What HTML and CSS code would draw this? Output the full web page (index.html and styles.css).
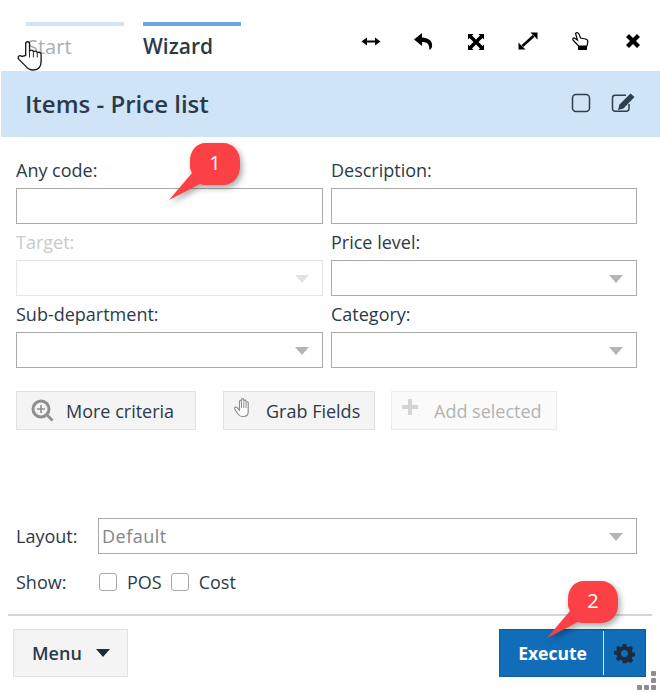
FILE: index.html
```html
<!doctype html>
<html lang="en">
<head>
    <meta charset="utf-8">
    <title>Items - Price list</title>
    <link rel="stylesheet" href="styles.css">
</head>
<body>
<div class="page">
    <div class="topbar">
        <div class="tab tab-start">Start</div>
        <div class="tab tab-wizard">Wizard</div>
        <div class="tools">
            <svg class="tool" viewBox="0 0 20 20"><path d="M.5 10.500l5.500-4v3h8v-3l5.500 4-5.500 4v-3H6v3z"/></svg>
            <svg class="tool" viewBox="0 0 20 20"><path d="M9 2L1 8.500 9 15v-4c3.500 0 6 .8 7 4l.5 4c2-1 3-3 2.500-6-.7-4-4-6-10-6.500z"/></svg>
            <svg class="tool" viewBox="0 0 20 20"><path d="M2 3h5.500L6 4.500l4 4 4-4L12.500 3H18v5.500L16.500 7l-4 4 4 4 1.500-1.500V19h-5.500l1.500-1.500-4-4-4 4L7.500 19H2v-5.500L3.500 15l4-4-4-4L2 8.500z"/></svg>
            <svg class="tool" viewBox="0 0 20 20"><path d="M12.500 1.500h7v7zM7.500 18.500h-7v-7z"/><path d="M15.500 5L4.500 15" stroke="#000" stroke-width="2.600"/></svg>
            <svg class="tool" viewBox="0 0 20 20"><path d="M4.500 2.500c1-1.200 3-1 3.500.5l1.500 4 5 1c1.500.4 2.500 1.500 2.300 3l-.8 4H7.500L2 9c-.8-1 .4-2.600 1.800-1.800L6.500 9z" fill="#fff" stroke="#000" stroke-width="1.200"/><rect x="7" y="15" width="9" height="4"/></svg>
            <svg class="tool" viewBox="0 0 20 20"><path d="M3 6l3-3 4 4 4-4 3 3-4 4 4 4-3 3-4-4-4 4-3-3 4-4z"/></svg>
        </div>
    </div>

    <div class="title-bar">
        <h1 class="title">Items - Price list</h1>
        <div class="title-icons">
            <svg class="title-icon" viewBox="0 0 20 20"><rect x="1.500" y="1.500" width="17" height="17" rx="3.500" fill="none" stroke="#2f3d4c" stroke-width="1.500"/></svg>
            <svg class="title-icon title-icon-edit" viewBox="0 0 24 20"><path d="M18 11v4.500c0 1.700-1 2.700-2.700 2.700H4.200c-1.700 0-2.700-1-2.700-2.700V5c0-1.700 1-2.700 2.700-2.700H15" fill="none" stroke="#2f3d4c" stroke-width="1.500"/><path d="M19.500.5l4 3.500-11 11.500-5.500 1.500 1.500-5.500z" fill="#2f3d4c"/></svg>
        </div>
    </div>

    <div class="form">
        <div class="grid">
            <div class="field">
                <label class="label">Any code:</label>
                <div class="input"></div>
            </div>
            <div class="field">
                <label class="label">Description:</label>
                <div class="input"></div>
            </div>
            <div class="field disabled">
                <label class="label">Target:</label>
                <div class="input select"></div>
            </div>
            <div class="field">
                <label class="label">Price level:</label>
                <div class="input select"></div>
            </div>
            <div class="field">
                <label class="label">Sub-department:</label>
                <div class="input select"></div>
            </div>
            <div class="field">
                <label class="label">Category:</label>
                <div class="input select"></div>
            </div>
        </div>

        <div class="actions">
            <button class="btn btn-more">
                <svg class="btn-icon" viewBox="0 0 24 24"><circle cx="10" cy="10" r="8" fill="none" stroke="#8f8f8f" stroke-width="3"/><path d="M15.500 17.500l2-2 5 5-2 2z" fill="#8f8f8f"/><path d="M10 6v8M6 10h8" stroke="#8f8f8f" stroke-width="1.600"/></svg>
                More criteria
            </button>
            <button class="btn btn-grab">
                <svg class="btn-icon grab-icon" viewBox="0 0 20 22"><path d="M6.500 13V4.500c0-1.500 2-1.500 2 0V2.800c0-1.500 2.300-1.500 2.300 0v1.500c0-1.500 2.200-1.500 2.200 0v1.500c0-1.400 2.200-1.400 2.200 0v8.700c0 3-1.500 5-4.500 5H9c-2 0-3-1-4-2.500L1.800 12c-.8-1.400 1-2.600 2.200-1.400z" fill="#fff" stroke="#8f8f8f" stroke-width="1.200"/><path d="M8.500 4.500V11M10.800 4.300V11M13 5.800V11" stroke="#8f8f8f" stroke-width="1"/></svg>
                Grab Fields
            </button>
            <button class="btn btn-add">
                <svg class="btn-icon add-icon" viewBox="0 0 16 16"><path d="M6 0h4v6h6v4h-6v6H6v-6H0V6h6z" fill="#d4d4d4"/></svg>
                Add selected
            </button>
        </div>

        <div class="layout-row">
            <span class="row-label">Layout:</span>
            <div class="input select layout-input">Default</div>
        </div>

        <div class="show-row">
            <span class="row-label">Show:</span>
            <span class="check"></span><span class="check-text">POS</span>
            <span class="check"></span><span class="check-text">Cost</span>
        </div>
    </div>

    <div class="footer">
        <button class="menu-btn">Menu <span class="caret"></span></button>
        <div class="execute">
            <span class="execute-text">Execute</span>
            <span class="execute-gear">
                <svg class="gear" viewBox="0 0 24 24"><path fill-rule="evenodd" fill="#1c2c3f" d="M10 1h4l.6 3.100 2 .8L19.200 3.200l2.800 2.800-1.700 2.600.8 2 3.100.6v4l-3.100.6-.8 2 1.700 2.600-2.800 2.800-2.600-1.700-2 .8L14 23h-4l-.6-3.100-2-.8-2.600 1.700L2 18l1.700-2.600-.8-2L0 13V9l2.900-.6.8-2L2 6l2.800-2.800 2.600 1.700 2-.8zM12 8a4 4 0 1 0 0 8 4 4 0 0 0 0-8z"/></svg>
            </span>
        </div>
    </div>

    <div class="grip">
        <i></i><i></i><i></i><i></i><i></i>
    </div>

    <!-- annotations on top of the screenshot -->
    <div class="callout callout-one">
        <svg viewBox="0 0 80 70"><path class="bubble" d="M38 1h17c10 0 17 8 17 18v6c0 10-7 18-17 18H38c-2 0-4 0-6-1L1 58l23-27c-1-2-2-4-2-6v-6C22 9 28 1 38 1z"/></svg>
        <span class="callout-num">1</span>
    </div>
    <div class="callout callout-two">
        <svg viewBox="0 0 80 70"><path class="bubble" d="M38 1h17c10 0 17 8 17 18v6c0 10-7 18-17 18H38c-2 0-4 0-6-1L1 58l23-27c-1-2-2-4-2-6v-6C22 9 28 1 38 1z"/></svg>
        <span class="callout-num">2</span>
    </div>

    <svg class="cursor" viewBox="0 0 28 34"><path d="M9 17V5c0-3 4-3 4 0v8c0-2 4-2 4 0v1c0-2 4-2 4 0v1c0-2 4-2 4 1v7c0 6-3 9-8 9-4 0-6-1-8-4l-7-7c-2-3 1-5 3-3z" fill="#fff" stroke="#1a1a1a" stroke-width="1.400"/><path d="M13 13v6M17 14v5M21 15v4" stroke="#1a1a1a" stroke-width="1"/></svg>
</div>
</body>
</html>
```

FILE: styles.css
```css
* {
    box-sizing: border-box;
    padding: 0;
    margin: 0;
}

body {
    background: #fff;
    color: #2b3a4a;
    font-family: "Open Sans", "Liberation Sans", sans-serif;
    font-size: 18px;
}

.page {
    width: 660px;
    height: 693px;
    position: relative;
    overflow: hidden;
}

/* top tabs */
.topbar {
    height: 71px;
    padding-left: 26px;
    display: flex;
}

.tab {
    width: 98px;
    height: 49px;
    margin-right: 19px;
    padding-top: 6px;
    margin-top: 22px;
    border-top: 4px solid #cfe5f7;
    font-size: 20px;
    line-height: 29px;
    color: #a9adb1;
}

.tab-start {
    padding-left: 1px;
}

.tab-wizard {
    border-top-color: #6aa8df;
    color: #2b3a4a;
    font-size: 21px;
    font-weight: 600;
}

.tools {
    display: flex;
    margin-left: auto;
    margin-right: 17px;
    padding-top: 31px;
    gap: 32.400px;
}

.tool {
    width: 20px;
    height: 20px;
}

/* title bar */
.title-bar {
    height: 66px;
    margin-left: 1px;
    padding: 0 25px 2px 24px;
    background: #cfe5f7;
    display: flex;
    align-items: center;
    justify-content: space-between;
}

.title {
    font-size: 24px;
    font-weight: 600;
    color: #2b3a4a;
}

.title-icons {
    display: flex;
    align-items: center;
    gap: 20px;
}

.title-icon {
    width: 20px;
    height: 20px;
}

.title-icon-edit {
    width: 24px;
}

/* form */
.form {
    padding: 0 23px 0 16px;
}

.grid {
    display: grid;
    grid-template-columns: 307px 306px;
    column-gap: 8px;
    row-gap: 0;
    padding-top: 15px;
}

.field {
    height: 72px;
}

.label {
    display: block;
    height: 36px;
    line-height: 36px;
    color: #2b3a4a;
}

.input {
    height: 36px;
    border: 1px solid #a9a9a9;
    background: #fff;
    position: relative;
}

.select::after {
    content: "";
    position: absolute;
    right: 13px;
    top: 14px;
    border-left: 7.500px solid transparent;
    border-right: 7.500px solid transparent;
    border-top: 8px solid #b5b5b5;
}

.disabled .label {
    color: #c9cacb;
}

.disabled .input {
    border-color: #e6e6e6;
}

.disabled .select::after {
    border-top-color: #e3e3e3;
}

.actions {
    display: flex;
    margin-top: 23px;
    height: 39px;
}

.btn {
    height: 39px;
    background: #f4f4f4;
    border: 1px solid #e2e2e2;
    font-family: inherit;
    font-size: 18px;
    color: #2b3a4a;
    display: flex;
    align-items: center;
}

.btn-icon {
    width: 24px;
    height: 24px;
}

.btn-more {
    width: 180px;
    padding-left: 14px;
    gap: 11px;
}

.btn-grab {
    width: 152px;
    margin-left: 27px;
    padding-left: 9px;
    gap: 13px;
}

.grab-icon {
    width: 20px;
    margin-top: -6px;
}

.btn-add {
    width: 166px;
    margin-left: 16px;
    padding-left: 10px;
    gap: 16px;
    background: #fafafa;
    border-color: #ececec;
    color: #b3b3b3;
}

.add-icon {
    width: 16px;
    height: 16px;
    margin-top: -8px;
}

.layout-row {
    display: flex;
    align-items: center;
    margin-top: 88px;
}

.row-label {
    width: 82px;
}

.layout-input {
    width: 539px;
    padding-left: 3px;
    line-height: 34px;
    color: #7f858a;
    letter-spacing: 0.500px;
}

.show-row {
    display: flex;
    align-items: center;
    margin-top: 16px;
    height: 24px;
}

.show-row .row-label {
    width: 83px;
}

.check {
    width: 18px;
    height: 18px;
    border: 1px solid #a9a9a9;
    border-radius: 3px;
}

.check-text {
    margin-left: 10px;
    margin-right: 9px;
}

/* footer */
.footer {
    margin: 20px 8px 0;
    padding: 13px 6px 0 5px;
    border-top: 2px solid #d6d6d6;
    display: flex;
    justify-content: space-between;
    width: 644px;
}

.menu-btn {
    width: 115px;
    height: 48px;
    background: #f4f4f4;
    border: 1px solid #e2e2e2;
    font-family: inherit;
    font-size: 18px;
    font-weight: 600;
    color: #2b3a4a;
    display: flex;
    align-items: center;
    padding-left: 18px;
}

.caret {
    margin-left: 14px;
    border-left: 7px solid transparent;
    border-right: 7px solid transparent;
    border-top: 8px solid #1c2c3f;
}

.execute {
    width: 147px;
    height: 48px;
    background: #126db9;
    border: 1px solid #0d5a9c;
    display: flex;
    align-items: stretch;
}

.execute-text {
    width: 103px;
    padding-left: 2px;
    text-align: center;
    line-height: 46px;
    font-size: 17.500px;
    color: #fff;
    font-weight: 700;
}

.execute-gear {
    flex: 1;
    border-left: 1px solid #d9e8f5;
    margin: 1px 0;
    display: flex;
    align-items: center;
    justify-content: center;
}

.gear {
    width: 21px;
    height: 21px;
}

/* resize grip */
.grip {
    position: absolute;
    left: 637px;
    top: 671px;
    width: 20px;
    height: 20px;
}

.grip i {
    position: absolute;
    width: 5px;
    height: 5px;
    background: #8e8e8e;
    border-radius: 1px;
}

.grip i:nth-child(1) { left: 14px; top: 0; }
.grip i:nth-child(2) { left: 14px; top: 7px; }
.grip i:nth-child(3) { left: 14px; top: 14px; }
.grip i:nth-child(4) { left: 7px; top: 14px; }
.grip i:nth-child(5) { left: 0; top: 14px; }

/* annotations */
.callout {
    position: absolute;
    width: 80px;
    height: 70px;
}

.callout svg {
    width: 80px;
    height: 70px;
    overflow: visible;
}

.bubble {
    fill: #fb4146;
    filter: drop-shadow(2px 3px 3px rgba(0, 0, 0, 0.35));
}

.callout-one {
    left: 168px;
    top: 142px;
}

.callout-two {
    left: 546px;
    top: 580px;
}

.callout-num {
    position: absolute;
    left: 22px;
    top: 0;
    width: 50px;
    line-height: 42px;
    text-align: center;
    color: #fff;
    font-size: 20px;
}

.cursor {
    position: absolute;
    left: 17px;
    top: 39px;
    width: 27px;
    height: 33px;
}
```
